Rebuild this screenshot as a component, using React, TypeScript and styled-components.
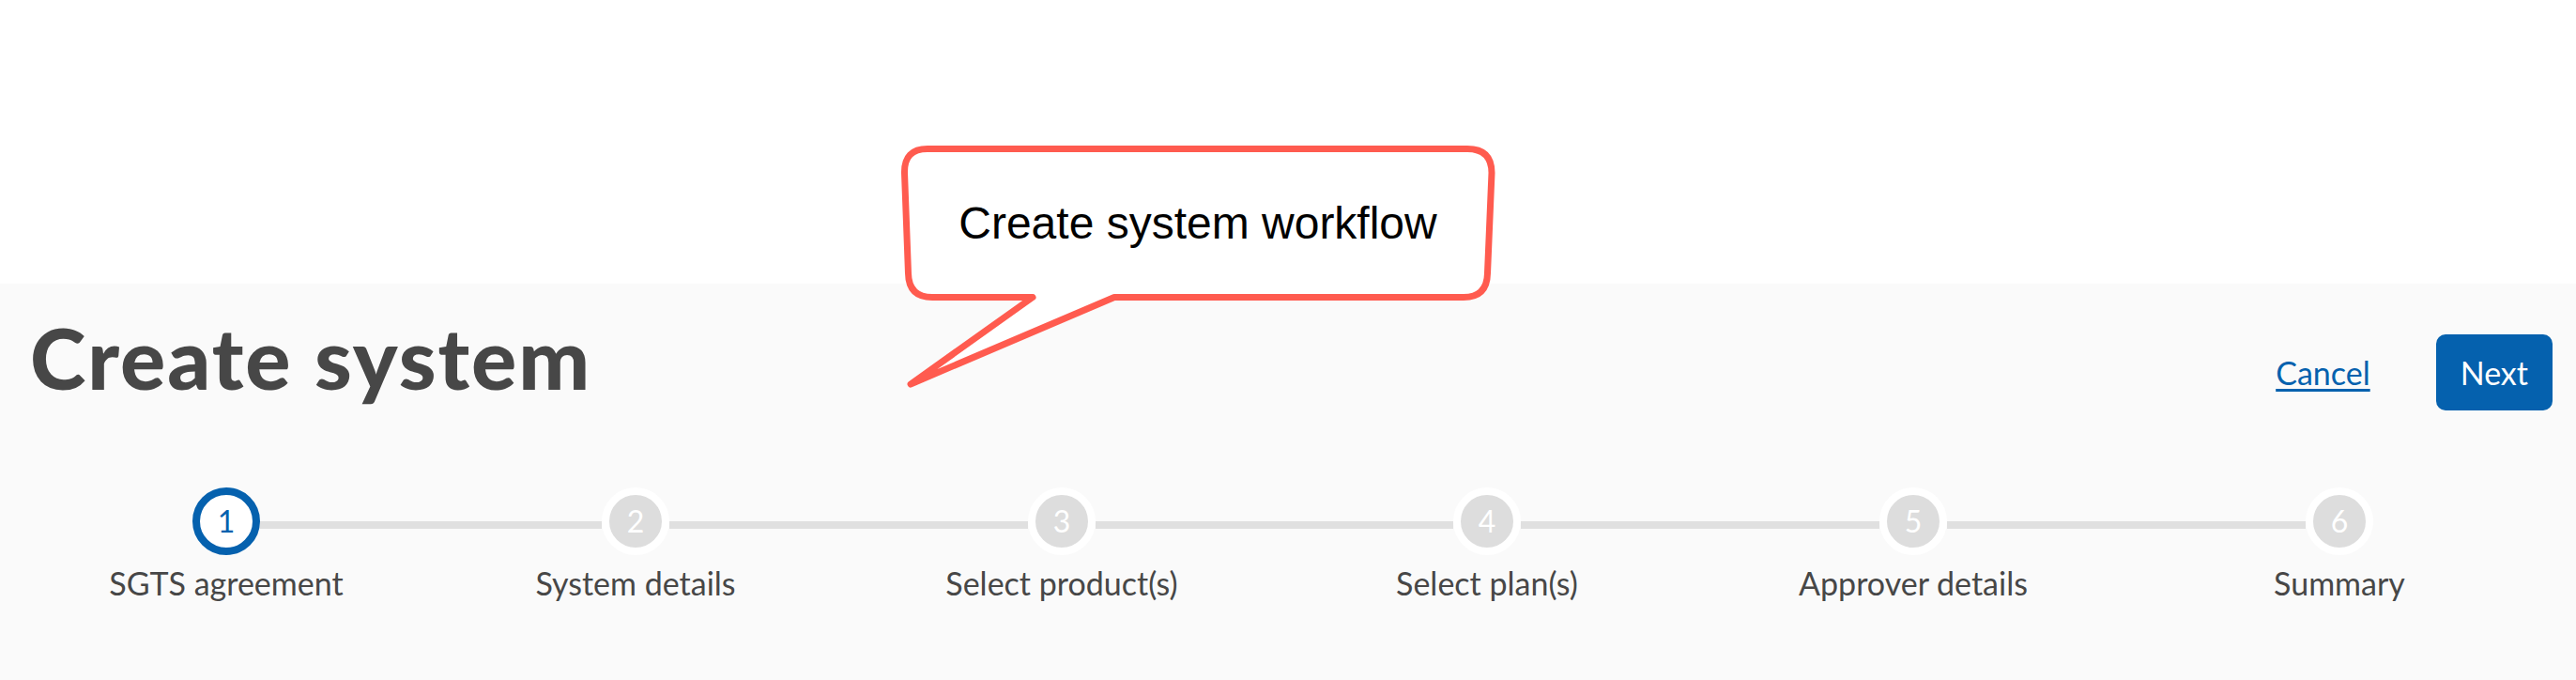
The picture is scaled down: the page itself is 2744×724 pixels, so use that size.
import React from "react";
import styled, { createGlobalStyle } from "styled-components";

const GlobalStyle = createGlobalStyle`
  html, body {
    margin: 0;
    padding: 0;
    background: #ffffff;
  }
  body {
    font-family: Lato, "Open Sans", sans-serif;
  }
  #root {
    min-height: 100vh;
  }
`;

const Page = styled.div`
  position: relative;
  min-height: 100vh;
  display: flex;
  flex-direction: column;
  background: #ffffff;
`;

const TopSpace = styled.div`
  flex: none;
  height: 302px;
`;

const Panel = styled.section`
  flex: 1;
  background: #fafafa;
`;

const Header = styled.header`
  display: flex;
  justify-content: space-between;
  align-items: flex-start;
  padding: 24px 25px 0 32px;
`;

const Title = styled.h1`
  margin: 0;
  font-family: Lato, sans-serif;
  font-weight: 900;
  font-size: 90px;
  line-height: 108px;
  letter-spacing: 2px;
  color: #474747;
`;

const Actions = styled.div`
  display: flex;
  align-items: center;
  gap: 70px;
  margin-top: 30px;
`;

const CancelLink = styled.a`
  font-family: Lato, sans-serif;
  font-size: 34px;
  line-height: 40px;
  color: #0561ae;
  text-decoration: underline;
  text-decoration-thickness: 3px;
  text-underline-offset: 4px;
  cursor: pointer;
`;

const NextButton = styled.button`
  box-sizing: border-box;
  height: 81px;
  padding: 0 26px;
  border: none;
  border-radius: 10px;
  background: #0561ae;
  color: #ffffff;
  font-family: Lato, sans-serif;
  font-size: 34px;
  line-height: 40px;
  cursor: pointer;
`;

const Stepper = styled.ol`
  list-style: none;
  margin: 82px 0 0;
  padding: 0 0 0 16px;
  display: grid;
  grid-template-columns: 450px 422px 486px 420px 488px 420px;
`;

const Step = styled.li`
  display: flex;
  flex-direction: column;
  align-items: center;
`;

const Track = styled.div`
  display: flex;
  align-items: flex-start;
  width: 100%;
`;

const Connector = styled.span<{ $hidden?: boolean }>`
  flex: 1;
  height: 8px;
  margin-top: 36px;
  background: ${(p) => (p.$hidden ? "transparent" : "#e0e0e0")};
`;

const Circle = styled.span<{ $active?: boolean }>`
  box-sizing: border-box;
  flex: none;
  width: 72px;
  height: 72px;
  border-radius: 50%;
  border: 8px solid ${(p) => (p.$active ? "#0561ae" : "#ffffff")};
  background: ${(p) => (p.$active ? "#ffffff" : "#dddddd")};
  color: ${(p) => (p.$active ? "#0561ae" : "#ffffff")};
  display: flex;
  align-items: center;
  justify-content: center;
  font-family: Lato, sans-serif;
  font-size: 32px;
  line-height: 32px;
`;

const StepLabel = styled.span`
  margin-top: 10px;
  font-family: Lato, sans-serif;
  font-size: 34px;
  line-height: 40px;
  color: #474747;
  white-space: nowrap;
`;

const Callout = styled.div`
  position: absolute;
  left: 955px;
  top: 150px;
  width: 645px;
  height: 270px;
`;

const CalloutShape = styled.svg`
  position: absolute;
  left: 0;
  top: 0;
  overflow: visible;
`;

const CalloutText = styled.div`
  position: relative;
  margin: 5px 0 0 5px;
  width: 632px;
  height: 165px;
  display: flex;
  align-items: center;
  justify-content: center;
  font-family: "Liberation Sans", Arial, sans-serif;
  font-size: 48px;
  line-height: 55px;
  color: #000000;
`;

const steps = [
  "SGTS agreement",
  "System details",
  "Select product(s)",
  "Select plan(s)",
  "Approver details",
  "Summary",
];

export default function App() {
  return (
    <>
      <GlobalStyle />
      <Page>
        <TopSpace />
        <Panel>
          <Header>
            <Title>Create system</Title>
            <Actions>
              <CancelLink>Cancel</CancelLink>
              <NextButton>Next</NextButton>
            </Actions>
          </Header>
          <Stepper>
            {steps.map((label, i) => (
              <Step key={label}>
                <Track>
                  <Connector $hidden={i === 0} />
                  <Circle $active={i === 0}>{i + 1}</Circle>
                  <Connector $hidden={i === steps.length - 1} />
                </Track>
                <StepLabel>{label}</StepLabel>
              </Step>
            ))}
          </Stepper>
        </Panel>
        <Callout>
          <CalloutShape width="645" height="270" viewBox="0 0 645 270">
            <path
              d="M 33 8.5 L 608 8.5 Q 634 8.5 634 34 L 629.5 141 Q 629 166.5 604 166.5 L 232 166.5 L 15 259 L 145 166.5 L 38 166.5 Q 13 166.5 12.5 141 L 8.5 34 Q 8 8.5 33 8.5 Z"
              fill="#ffffff"
              stroke="#ff5b4f"
              strokeWidth="7"
              strokeLinejoin="round"
              strokeLinecap="round"
            />
          </CalloutShape>
          <CalloutText>Create system workflow</CalloutText>
        </Callout>
      </Page>
    </>
  );
}
